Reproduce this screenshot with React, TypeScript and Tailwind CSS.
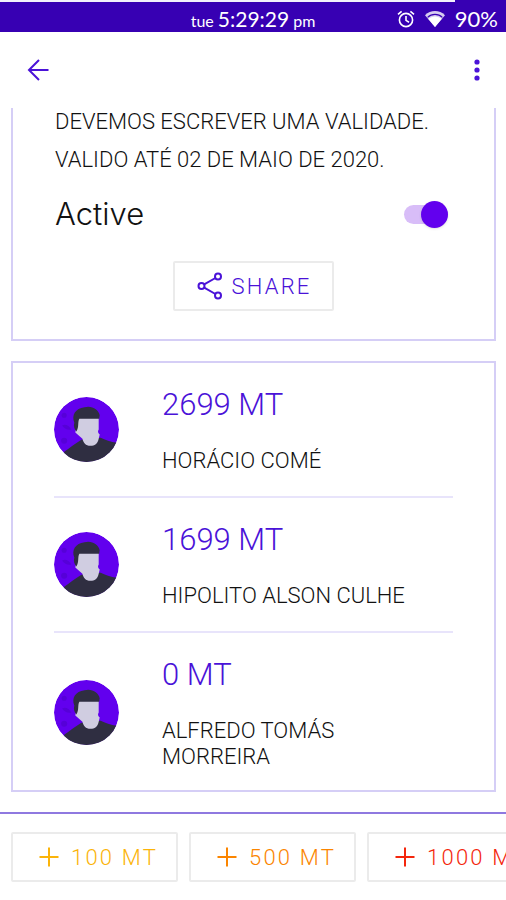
import React, { useState } from 'react';

interface Member {
  name: string;
  amount: number;
}

const members: Member[] = [
  { name: 'HORÁCIO COMÉ', amount: 2699 },
  { name: 'HIPOLITO ALSON CULHE', amount: 1699 },
  { name: 'ALFREDO TOMÁS MORREIRA', amount: 0 },
];

const topUps = [
  { amount: 100, className: 'text-[#fbb40a]' },
  { amount: 500, className: 'text-[#fb8500]' },
  { amount: 1000, className: 'text-[#f4260c]' },
];

const AlarmIcon = () => (
  <svg width="18" height="18" viewBox="0 0 18 18" fill="none" stroke="currentColor" strokeWidth="1.6" aria-hidden="true">
    <circle cx="9" cy="10" r="6.6" />
    <path d="M9 6v4.4l3 1.8M1 4.4 4.6 1.4M17 4.4l-3.6-3" />
  </svg>
);

const WifiIcon = () => (
  <svg width="20" height="18" viewBox="0 0 20 18" aria-hidden="true">
    <path d="M0 5.2C5.6-.4 14.4-.4 20 5.2L10 17z" fill="currentColor" opacity="0.8" />
    <path d="M3.400 9c3.600-3.400 9.600-3.400 13.200 0L10 17z" fill="currentColor" />
    <path d="M2.600 7.400c4.200-4 10.600-4 14.800 0" stroke="#3700b3" strokeWidth="1.200" fill="none" />
  </svg>
);

const BackIcon = () => (
  <svg width="22" height="22" viewBox="0 0 22 22" fill="none" stroke="currentColor" strokeWidth="2" aria-hidden="true">
    <path d="M21.5 11H2M12 1 2 11l10 10" />
  </svg>
);

const MoreIcon = () => (
  <svg width="6" height="22" viewBox="0 0 6 22" fill="currentColor" aria-hidden="true">
    <circle cx="3" cy="3" r="2.6" />
    <circle cx="3" cy="11" r="2.6" />
    <circle cx="3" cy="19" r="2.6" />
  </svg>
);

const ShareIcon = () => (
  <svg width="26" height="28" viewBox="0 0 26 28" fill="none" stroke="currentColor" strokeWidth="2" aria-hidden="true">
    <circle cx="4.5" cy="14" r="3" />
    <circle cx="21" cy="4.5" r="3" />
    <circle cx="21" cy="23.5" r="3" />
    <path d="M7.2 12.4 18.4 6M7.2 15.6 18.4 22" />
  </svg>
);

const PlusIcon = () => (
  <svg width="20" height="20" viewBox="0 0 20 20" fill="none" stroke="currentColor" strokeWidth="2" aria-hidden="true">
    <path d="M10 .5v19M.5 10h19" />
  </svg>
);

const Avatar = () => (
  <svg className="size-[65px] shrink-0 rounded-full" viewBox="0 0 64 64" aria-hidden="true">
    <circle cx="32" cy="32" r="32" fill="#6200ee" />
    <g fill="#5600d8">
      <circle cx="10" cy="18" r="2.5" />
      <path d="M8 28c3-2 7 0 9 4-4 1-7-1-9-4z" />
      <circle cx="10" cy="43" r="3" />
    </g>
    <path d="M10 54c5-4 11-8 17-12l19-2c4 2 10 4 16 5v19H10z" fill="#2f2e41" />
    <path d="M24 19h20v13c-1 2-1 3 1 5l-1 4c-1 5-4 7-8 7-5 0-7-3-8-7l-7-6z" fill="#d0cde1" />
    <path d="M22 34c-2-3-3-5-2-9-3-7 1-14 10-15 7-2 14 2 15 8l-.5 3.500H25c-2 3 0 8-3 12.500z" fill="#2f2e41" />
  </svg>
);

const MemberRow = ({ member }: { member: Member }) => (
  <li className="flex items-center gap-[43px] border-b-2 border-[#e8e4fb] py-[22px] last:border-b-0 last:pb-5">
    <Avatar />
    <div className="flex flex-1 flex-col gap-[23px] pr-4">
      <p className="text-[31px] leading-10 text-[#4a12d8]">{member.amount} MT</p>
      <p className="text-[22px] leading-[26px]">{member.name}</p>
    </div>
  </li>
);

export default function App() {
  const [active, setActive] = useState(true);

  return (
    <div className="flex min-h-screen flex-col overflow-x-hidden bg-white font-[Roboto,sans-serif] font-light text-[#111111]">
      {/* Status bar with the battery line on top */}
      <div className="bg-[#3700b3] font-normal text-white">
        <div className="h-[2px] w-[90%] bg-[#f3f1fc]" />
        <div className="grid h-[30px] grid-cols-[1fr_auto_1fr] items-center font-[Lato,sans-serif] text-[21px]">
          <p className="col-start-2 flex items-baseline gap-1">
            <span className="text-base">tue</span>
            <span>5:29:29</span>
            <span className="text-base">pm</span>
          </p>
          <div className="flex items-center justify-end gap-2.5 pr-2">
            <AlarmIcon />
            <WifiIcon />
            <span className="text-[22px]">90%</span>
          </div>
        </div>
      </div>

      <header className="flex h-[76px] items-center justify-between pr-[26px] pl-[27px] text-[#4a12d8]">
        <button type="button" aria-label="Back">
          <BackIcon />
        </button>
        <button type="button" aria-label="More options">
          <MoreIcon />
        </button>
      </header>

      <main className="flex flex-1 flex-col gap-5 pr-2.5 pb-5 pl-[11px]">
        <section className="border-x-2 border-b-2 border-[#d5cef6] px-[42px] pb-7">
          <div className="flex flex-col gap-[11px] text-[22px] leading-[27px] whitespace-nowrap">
            <p>DEVEMOS ESCREVER UMA VALIDADE.</p>
            <p>VALIDO ATÉ 02 DE MAIO DE 2020.</p>
          </div>
          <div className="mt-[21px] flex h-10 items-center justify-between pr-1">
            <label htmlFor="active" className="font-[Inter,sans-serif] text-[31px]">
              Active
            </label>
            <input
              id="active"
              type="checkbox"
              role="switch"
              checked={active}
              onChange={e => setActive(e.target.checked)}
              className="relative h-[19px] w-11 appearance-none rounded-full bg-gray-300 before:absolute before:-top-1 before:left-0 before:size-[27px] before:rounded-full before:bg-gray-100 before:shadow checked:bg-[#d8bdf8] checked:before:right-0 checked:before:left-auto checked:before:bg-[#6200ee]"
            />
          </div>
          <button
            type="button"
            className="mx-auto mt-[27px] flex h-[50px] items-center gap-2 rounded-xs border-2 border-[#ebebeb] pr-5 pl-[22px] text-[22px] tracking-widest text-[#4a12d8]"
          >
            <ShareIcon />
            SHARE
          </button>
        </section>

        <ul className="border-2 border-[#d5cef6] px-[41px]">
          {members.map(member => (
            <MemberRow key={member.name} member={member} />
          ))}
        </ul>
      </main>

      <footer className="flex gap-[11px] overflow-hidden border-t-2 border-[#8f79e0] px-[11px] py-[18px]">
        {topUps.map(({ amount, className }) => (
          <button
            key={amount}
            type="button"
            className={`flex h-[50px] shrink-0 items-center gap-3 rounded-xs border-2 border-[#ebebeb] pr-[18px] pl-[26px] text-[22px] tracking-widest ${className}`}
          >
            <PlusIcon />
            {amount} MT
          </button>
        ))}
      </footer>
    </div>
  );
}
